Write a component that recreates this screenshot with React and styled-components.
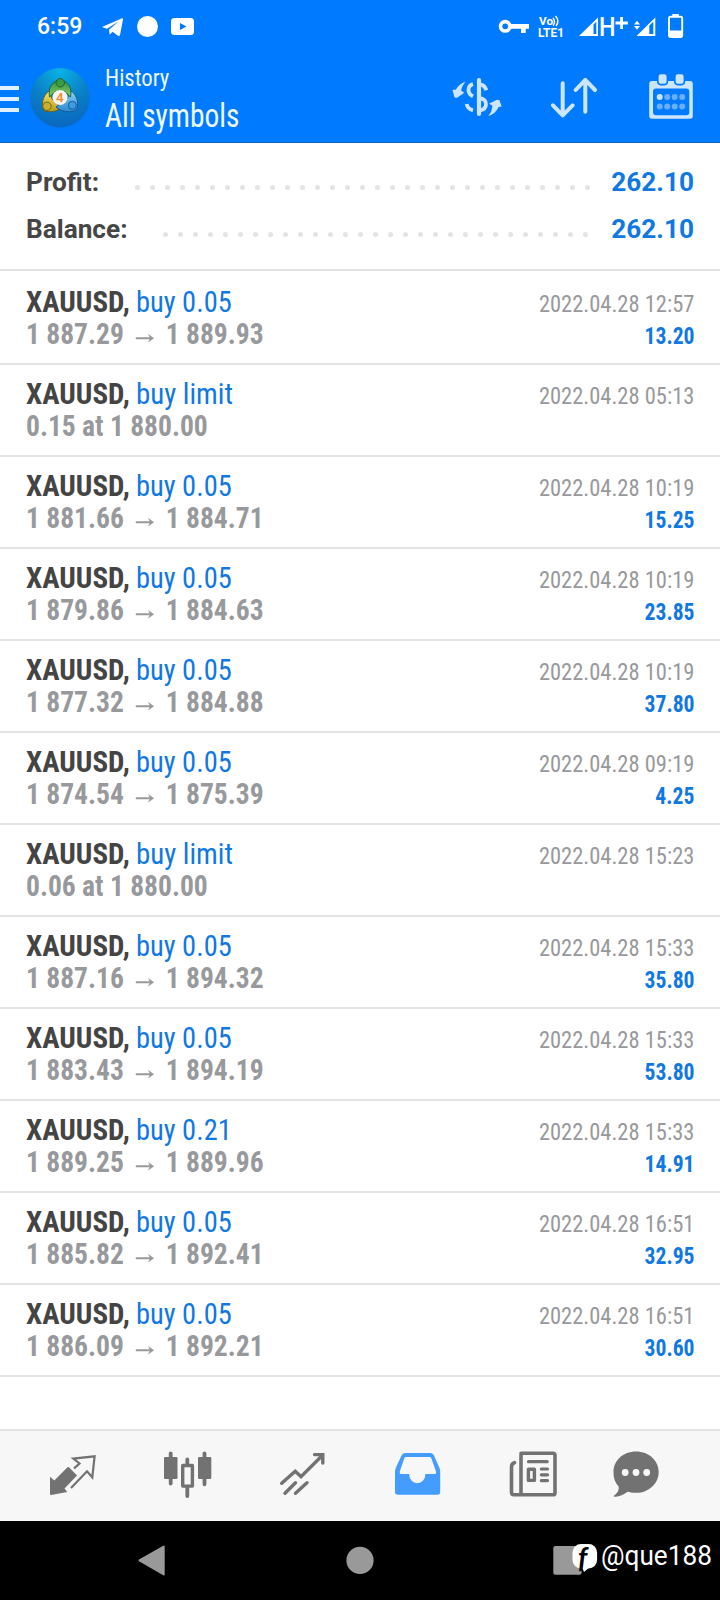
import React from "react";
import styled, { createGlobalStyle } from "styled-components";

const Global = createGlobalStyle`
  * { box-sizing: border-box; }
  body { margin: 0; background: #fff; font-family: Roboto, "Liberation Sans", sans-serif; }
`;

const blue = "#1078e2";
const grey = "#98999c";
const condensed = `font-family: "Roboto Condensed", Roboto, "Liberation Sans", sans-serif; font-stretch: 75%;`;

const Screen = styled.div`
  width: 720px;
  height: 1600px;
  display: flex;
  flex-direction: column;
  background: #fff;
  overflow: hidden;
`;

const Header = styled.header`
  height: 143px;
  flex: none;
  background: #007aff;
  border-bottom: 1px solid #1468c4;
`;

const StatusBar = styled.div`
  height: 54px;
  display: flex;
  justify-content: space-between;
  padding: 0 36px 0 37px;
  color: #fff;
`;

const StatusGroup = styled.div`
  display: flex;
  align-items: center;
`;

const Clock = styled.span`
  width: 64px;
  font-size: 23px;
  font-weight: 500;
  line-height: 54px;
`;

const AppBar = styled.div`
  height: 86px;
  display: flex;
  align-items: center;
`;

const Menu = styled.div`
  width: 19px;
  margin-right: 11px;
  padding-top: 4px;
  display: flex;
  flex-direction: column;
  gap: 7px;
`;

const MenuBar = styled.span`
  height: 4px;
  background: #dff1ff;
`;

const Squeezed = styled.span`
  display: inline-block;
  white-space: pre;
  transform: scaleX(${(p) => p.$x});
  transform-origin: ${(p) => p.$from || "left"} center;
`;

const Titles = styled.div`
  flex: 1;
  margin-left: 15px;
  padding-top: 6px;
  color: #eef9ff;
  white-space: nowrap;
  ${condensed}
`;

const Caption = styled.div`
  font-size: 24.5px;
  line-height: 32px;
`;

const Title = styled.div`
  font-size: 32.5px;
  line-height: 44px;
`;

const Actions = styled.div`
  display: flex;
  gap: 48px;
  align-items: center;
  padding-right: 26px;
`;

const Summary = styled.section`
  height: 128px;
  flex: none;
  padding: 15px 26px 0;
  border-bottom: 2px solid #e3e3e3;
`;

const SummaryLine = styled.div`
  height: 47px;
  display: flex;
  justify-content: space-between;
  align-items: center;
  font-size: 26.2px;
  font-weight: 700;
  color: #464646;
`;

const Amount = styled.span`
  width: 83px;
  text-align: right;
  color: ${blue};
`;

const Leader = styled.span`
  flex: 1;
  display: flex;
  justify-content: flex-end;
  gap: 10px;
  padding: 11px ${(p) => p.$end}px 0 0;
`;

const Dot = styled.i`
  width: 5px;
  height: 5px;
  border-radius: 50%;
  background: #e4e4e6;
`;

const List = styled.main`
  flex: 1;
  padding-top: 2px;
`;

const Deal = styled.article`
  height: 92px;
  padding: 13px 26px 0;
  border-bottom: 2px solid #e3e3e3;
  ${condensed}
`;

const DealLine = styled.div`
  height: 32px;
  display: flex;
  align-items: baseline;
  justify-content: space-between;
  line-height: 32px;
  white-space: pre;
`;

const Symbol = styled.span`
  font-size: 29px;
  font-weight: 700;
  color: #444;
`;

const Side = styled(Squeezed)`
  margin-left: -1px;
  font-weight: 400;
  color: ${blue};
`;

const Price = styled(Squeezed)`
  font-size: 29px;
  font-weight: 700;
  color: ${grey};
`;

const Arrow = styled.svg`
  width: 20px;
  height: 13px;
  margin: 0 12px 0 12px;
`;

const Time = styled(Squeezed)`
  font-size: 24.5px;
  color: ${grey};
`;

const Gain = styled(Squeezed)`
  font-size: 24px;
  font-weight: 700;
  color: ${blue};
`;

const Tabs = styled.nav`
  height: 92px;
  flex: none;
  display: grid;
  grid-template-columns: 114px 115px 115px 116px 104px 50px;
  padding: 18px 0 0 48px;
  background: #f7f7f7;
  border-top: 2px solid #e3e3e3;
`;

const SystemNav = styled.footer`
  position: relative;
  height: 79px;
  flex: none;
  display: flex;
  align-items: center;
  justify-content: space-between;
  padding: 0 138px;
  background: #000;
`;

const Watermark = styled.div`
  position: absolute;
  left: 566px;
  top: 12px;
  width: 150px;
  display: flex;
  align-items: flex-start;
  color: #fff;
`;

const Handle = styled(Squeezed)`
  margin-top: 9px;
  font-size: 27px;
  line-height: 28px;
`;

const Icon = ({ box, children }) => (
  <svg width={box[2]} height={box[3]} viewBox={box.join(" ")} fill="none">
    {children}
  </svg>
);

const deals = [
  ["buy 0.05", "1 887.29", "1 889.93", "2022.04.28 12:57", "13.20"],
  ["buy limit", "0.15 at 1 880.00", "", "2022.04.28 05:13", ""],
  ["buy 0.05", "1 881.66", "1 884.71", "2022.04.28 10:19", "15.25"],
  ["buy 0.05", "1 879.86", "1 884.63", "2022.04.28 10:19", "23.85"],
  ["buy 0.05", "1 877.32", "1 884.88", "2022.04.28 10:19", "37.80"],
  ["buy 0.05", "1 874.54", "1 875.39", "2022.04.28 09:19", "4.25"],
  ["buy limit", "0.06 at 1 880.00", "", "2022.04.28 15:23", ""],
  ["buy 0.05", "1 887.16", "1 894.32", "2022.04.28 15:33", "35.80"],
  ["buy 0.05", "1 883.43", "1 894.19", "2022.04.28 15:33", "53.80"],
  ["buy 0.21", "1 889.25", "1 889.96", "2022.04.28 15:33", "14.91"],
  ["buy 0.05", "1 885.82", "1 892.41", "2022.04.28 16:51", "32.95"],
  ["buy 0.05", "1 886.09", "1 892.21", "2022.04.28 16:51", "30.60"],
];

const StatusLeft = () => (
  <StatusGroup>
    <Clock>6:59</Clock>
    <Icon box={[101, 0, 94, 54]}>
      <path d="M102 27 L122 18.3 Q123.3 18 123 19.5 L120 35 Q119.5 36.5 118 35.8 L112.5 31.8 L109.7 34.7 L109 29.8 L118.5 21.5 L107 28.8 Z" fill="#fff" />
      <circle cx="147.5" cy="26.5" r="10.5" fill="#fff" />
      <rect x="171" y="18" width="23" height="17" rx="3.5" fill="#fff" />
      <path d="M180 23 L186.5 26.5 L180 30 Z" fill="#007aff" />
    </Icon>
  </StatusGroup>
);

const StatusRight = () => (
  <StatusGroup>
    <Icon box={[498, 0, 186, 54]}>
      <circle cx="505.2" cy="26.3" r="4.7" stroke="#fff" strokeWidth="3.6" />
      <path d="M511 24 H529 V28.7 H525.7 V33 H521 V28.7 H511 Z" fill="#fff" />
      <text x="539" y="25.3" fontSize="10.5" fontWeight="700" fill="#fff" textLength="14" lengthAdjust="spacingAndGlyphs">Vo</text>
      <path d="M553 18 Q556 21.5 553 25.5 M555.5 16 Q560 21 556 26" stroke="#fff" strokeWidth="1.4" />
      <text x="538" y="37" fontSize="12.5" fontWeight="700" fill="#fff" textLength="26" lengthAdjust="spacingAndGlyphs">LTE1</text>
      <path d="M579 36 L598 17.5 V36 Z M593.5 24.5 V34 H596.3 V21.7 Z" fill="#fff" fillRule="evenodd" />
      <text x="599" y="36" fontSize="25.5" fontWeight="500" fill="#fff" textLength="16.5" lengthAdjust="spacingAndGlyphs">H</text>
      <path d="M615.5 23 H627.8 M621.6 17 V29" stroke="#fff" strokeWidth="2.8" />
      <path d="M634 24.5 L637 20.7 L640 24.5 Z M634 26 L637 29.7 L640 26 Z" fill="#fff" />
      <path d="M636.5 36 L655.3 17.5 V36 Z M649.3 25.5 V34 H653.3 V21.7 Z" fill="#fff" fillRule="evenodd" />
      <rect x="672.3" y="14" width="6.5" height="3" fill="#fff" />
      <rect x="669" y="16.8" width="13.2" height="20.2" rx="1.5" stroke="#fff" strokeWidth="1.9" />
      <rect x="669" y="30.5" width="13" height="7" fill="#fff" />
    </Icon>
  </StatusGroup>
);

const Logo = () => (
  <Icon box={[30, 66, 60, 62]}>
    <defs>
      <radialGradient id="sea" cx="0.5" cy="0.05" r="1">
        <stop offset="0" stopColor="#0ab2e6" />
        <stop offset="0.5" stopColor="#0a80c6" />
        <stop offset="1" stopColor="#0a64c0" />
      </radialGradient>
      <linearGradient id="leaf" x1="0" y1="0" x2="0" y2="1">
        <stop offset="0" stopColor="#2f8f3c" />
        <stop offset="1" stopColor="#86cf6a" />
      </linearGradient>
      <linearGradient id="gold" x1="0" y1="0" x2="0" y2="1">
        <stop offset="0" stopColor="#f2e56a" />
        <stop offset="1" stopColor="#b99a1c" />
      </linearGradient>
      <linearGradient id="sky" x1="0" y1="0" x2="0" y2="1">
        <stop offset="0" stopColor="#8fd6f8" />
        <stop offset="1" stopColor="#2a86cf" />
      </linearGradient>
    </defs>
    <circle cx="60" cy="97.8" r="29.7" fill="url(#sea)" />
    <path d="M49 91 C42 96 40.5 107 45 111 C50 112.5 57 111.5 61 108 L52 99 Z" fill="url(#gold)" stroke="#695c14" strokeWidth="0.9" />
    <path d="M71 91 C78 95 79.5 107 75.5 110.5 C70 113 61 112 56 107 L67 99 Z" fill="url(#sky)" stroke="#14568e" strokeWidth="0.9" />
    <path d="M49.5 97 C48 88 52 81 60 80 C68 81 72.5 88 70.5 97 Q60 84 49.5 97 Z" fill="url(#leaf)" stroke="#1c5c33" strokeWidth="0.9" />
    <circle cx="60.3" cy="82.8" r="4.2" fill="#3a9b43" stroke="#1c5c33" strokeWidth="0.9" />
    <circle cx="47" cy="106.3" r="4.2" fill="#c9b02b" stroke="#695c14" strokeWidth="0.9" />
    <circle cx="72.3" cy="105.3" r="4" fill="#3f9cdf" stroke="#14568e" strokeWidth="0.9" />
    <circle cx="60" cy="97.5" r="7.6" fill="#f7f3ee" />
    <text x="59.8" y="102.3" fontSize="13.5" fontWeight="500" textAnchor="middle" fill="#f08a2c">4</text>
  </Icon>
);

const tint = "#cce6ff";

const CurrencyIcon = () => (
  <Icon box={[452, 74, 50, 46]}>
    <path d="M452.5 90 L456 89.6 Q459 83.5 465.5 82 Q461.3 86.5 461.3 90.8 L464.3 92.8 L457 97.8 L454.5 97.5 Z" fill={tint} />
    <path d="M501.6 106.5 L498.6 107 Q495.5 114 488.3 116 Q492.5 111 492.3 105.5 L489 103.8 L497 99.8 L499.5 100.2 Z" fill={tint} />
    <path d="M473 84.2 Q468.5 85.5 468.5 90 Q468.5 94 473 96.3" stroke={tint} strokeWidth="3.8" />
    <path d="M466.7 104 Q467.5 109 473 110.3" stroke={tint} strokeWidth="3.8" />
    <path d="M479 80 V114" stroke={tint} strokeWidth="4.2" strokeLinecap="round" />
    <path d="M480 84.3 Q485 85 486.3 90.3 M480 98.2 Q486 99.5 486 104.3 Q486 109.3 480 110.5" stroke={tint} strokeWidth="3.8" />
  </Icon>
);

const SortIcon = () => (
  <Icon box={[550, 76, 48, 42]}>
    <path d="M562.7 83.3 V115 M553 105.3 L562.7 115.3 L572.6 105.3 M585.3 111.8 V80 M575.7 90 L585.3 79.8 L595 90" stroke={tint} strokeWidth="4" strokeLinecap="round" strokeLinejoin="round" />
  </Icon>
);

const CalendarIcon = () => (
  <Icon box={[646, 73, 48, 48]}>
    <path fillRule="evenodd" fill={tint} d="M652 81 H690 Q692.8 81 692.8 84 V116 Q692.8 118.8 690 118.8 H652 Q649.2 118.8 649.2 116 V84 Q649.2 81 652 81 Z M656 88.6 Q653 88.6 653 91.6 V112 Q653 115.2 656 115.2 H686.3 Q689.3 115.2 689.3 112 V91.6 Q689.3 88.6 686.3 88.6 Z" />
    <rect x="657.8" y="73.4" width="9.6" height="11.2" rx="3" fill={tint} stroke="#007aff" strokeWidth="1.6" />
    <rect x="674.8" y="73.4" width="9.6" height="11.2" rx="3" fill={tint} stroke="#007aff" strokeWidth="1.6" />
    {[97, 106.6].map((y) =>
      [659.7, 667.2, 674.7, 682.2].map((x) => (
        <circle key={x + "-" + y} cx={x} cy={y} r="3" fill={x < 660 && y < 100 ? tint : "#66b0ff"} />
      ))
    )}
  </Icon>
);

const g = "#727272";

const TabIcons = () => (
  <>
    <Icon box={[48, 1449, 50, 50]}>
      <path d="M50 1476.7 L54.3 1480.5 L67.5 1467.3 Q68.3 1466.7 69 1467.3 L77 1475.5 L64.5 1488.5 L67.3 1492 L51 1494.9 Q50 1494.9 50 1494 Z" fill={g} />
      <path d="M74 1468.3 L79.5 1463.5 L73.3 1458.6 L94.6 1456.3 L92.3 1477.3 L87 1471.3 L71 1488" stroke={g} strokeWidth="2.2" />
    </Icon>
    <Icon box={[162, 1449, 50, 50]}>
      <path d="M170.7 1453.3 V1483.5 M187.3 1459.3 V1464 M187.3 1488 V1496 M204.5 1453.3 V1484.3" stroke={g} strokeWidth="3.8" strokeLinecap="round" />
      <rect x="164" y="1457" width="13.5" height="22" rx="1.2" fill={g} />
      <rect x="198" y="1457" width="13.3" height="22" rx="1.2" fill={g} />
      <rect x="182.7" y="1465.5" width="9.7" height="20.6" stroke={g} strokeWidth="3.4" strokeLinejoin="round" />
    </Icon>
    <Icon box={[277, 1449, 50, 50]}>
      <path d="M281.7 1483.3 L295.2 1471.2 L301 1476.6 L322.5 1455.3 M314.5 1454.6 H322.8 V1463 M285 1493.3 L295.5 1482.7 M295.5 1493.3 L307 1482.7" stroke={g} strokeWidth="3.4" strokeLinecap="round" />
    </Icon>
    <Icon box={[392, 1449, 50, 50]}>
      <path fillRule="evenodd" fill="#449cff" d="M405 1453 H430.5 Q433 1453 434 1455.5 L439.5 1468 Q440.2 1470 440.2 1472 V1492 Q440.2 1494.7 437.5 1494.7 H397.7 Q395 1494.7 395 1492 V1472 Q395 1470 395.7 1468 L401.5 1455.5 Q402.5 1453 405 1453 Z M406 1457 Q404.8 1457 404.3 1458.3 L399.8 1471.5 Q399.3 1474 401 1474 H409.3 V1475 A8 8.3 0 0 0 425.3 1475 V1474 H434.5 Q436.5 1474 436 1471.5 L431.3 1458.3 Q430.8 1457 429.5 1457 Z" />
    </Icon>
    <Icon box={[508, 1449, 50, 50]}>
      <path d="M521 1453.3 H553 Q555 1453.3 555 1455.3 V1492.7 Q555 1494.8 553 1494.8 H514 Q511.5 1494.8 511.5 1492 V1467 Q511.5 1463.5 514.5 1462.7 M521 1493 V1455.3 Q521 1453.3 523 1453.3" stroke={g} strokeWidth="3.6" strokeLinecap="round" />
      <path d="M528.5 1461.7 H547.2 M541.3 1469 H547.5 M541.3 1474.8 H547.5 M541.3 1480.6 H547.5" stroke={g} strokeWidth="3.2" strokeLinecap="round" />
      <rect x="528.4" y="1469.2" width="6" height="11.2" stroke={g} strokeWidth="3.4" strokeLinejoin="round" />
    </Icon>
    <Icon box={[612, 1449, 50, 50]}>
      <path d="M636 1451.5 C649 1451.5 658.7 1460.5 658.7 1472 C658.7 1484 648 1493.3 635.5 1492.8 C632 1492.8 630 1492.2 627.5 1491.8 C623 1495.5 619 1496.7 614.3 1496.8 C613.4 1496.5 613.4 1496 614.3 1495.5 C617.5 1493 619.3 1490 618.7 1486.5 C615 1482.5 613.3 1478 613.5 1472 C613.5 1460.5 623 1451.5 636 1451.5 Z" fill={g} />
      {[625.2, 636, 646.7].map((x) => <circle key={x} cx={x} cy="1472.5" r="3.4" fill="#f7f7f7" />)}
    </Icon>
  </>
);

const SummaryRow = ({ label, dots, end }) => (
  <SummaryLine>
    <span>{label}</span>
    <Leader $end={end}>{Array.from({ length: dots }, (_, i) => <Dot key={i} />)}</Leader>
    <Amount>262.10</Amount>
  </SummaryLine>
);

export default function App() {
  return (
    <Screen>
      <Global />
      <Header>
        <StatusBar>
          <StatusLeft />
          <StatusRight />
        </StatusBar>
        <AppBar>
          <Menu><MenuBar /><MenuBar /><MenuBar /></Menu>
          <Logo />
          <Titles>
            <Caption><Squeezed $x={0.93}>History</Squeezed></Caption>
            <Title><Squeezed $x={0.905}>All symbols</Squeezed></Title>
          </Titles>
          <Actions>
            <CurrencyIcon />
            <SortIcon />
            <CalendarIcon />
          </Actions>
        </AppBar>
      </Header>
      <Summary>
        <SummaryRow label="Profit:" dots={31} end={21} />
        <SummaryRow label="Balance:" dots={29} end={23} />
      </Summary>
      <List>
        {deals.map(([side, from, to, time, gain], i) => (
          <Deal key={i}>
            <DealLine>
              <Symbol>XAUUSD, <Side $x={to ? 0.98 : 0.995}>{side}</Side></Symbol>
              <Time $x={0.918} $from="right">{time}</Time>
            </DealLine>
            <DealLine>
              <Price $x={0.95}>
                {from}
                {to && (
                  <Arrow viewBox="0 0 20 13" fill="none">
                    <path d="M0.5 7.3 H17" stroke={grey} strokeWidth="2" />
                    <path d="M13.5 3 L19.8 7.3 L13.5 11.6 L15.5 7.3 Z" fill={grey} />
                  </Arrow>
                )}
                {to}
              </Price>
              <Gain $x={0.9} $from="right">{gain}</Gain>
            </DealLine>
          </Deal>
        ))}
      </List>
      <Tabs><TabIcons /></Tabs>
      <SystemNav>
        <Icon box={[138, 1544, 28, 33]}>
          <path d="M139.5 1560.3 L163.7 1546.5 V1574.5 Z" fill="#999" stroke="#999" strokeWidth="2" strokeLinejoin="round" />
        </Icon>
        <Icon box={[346, 1544, 28, 33]}>
          <circle cx="360" cy="1560.4" r="13.6" fill="#999" />
        </Icon>
        <Icon box={[553, 1544, 29, 33]}>
          <rect x="553.3" y="1546" width="28.3" height="28.8" rx="2" fill="#999" />
        </Icon>
        <Watermark>
          <Icon box={[566, 1533, 35, 46]}>
            <path d="M582 1567 L584 1572 L591 1566 Z" fill="#fff" />
            <rect x="572.5" y="1544" width="24.6" height="24.6" rx="8.5" fill="#fff" />
            <text x="578" y="1567.5" fontSize="28" fontStyle="italic" fontWeight="700" fontFamily="Lato, sans-serif" fill="#000">f</text>
          </Icon>
          <Handle $x={0.97}>@que188</Handle>
        </Watermark>
      </SystemNav>
    </Screen>
  );
}
